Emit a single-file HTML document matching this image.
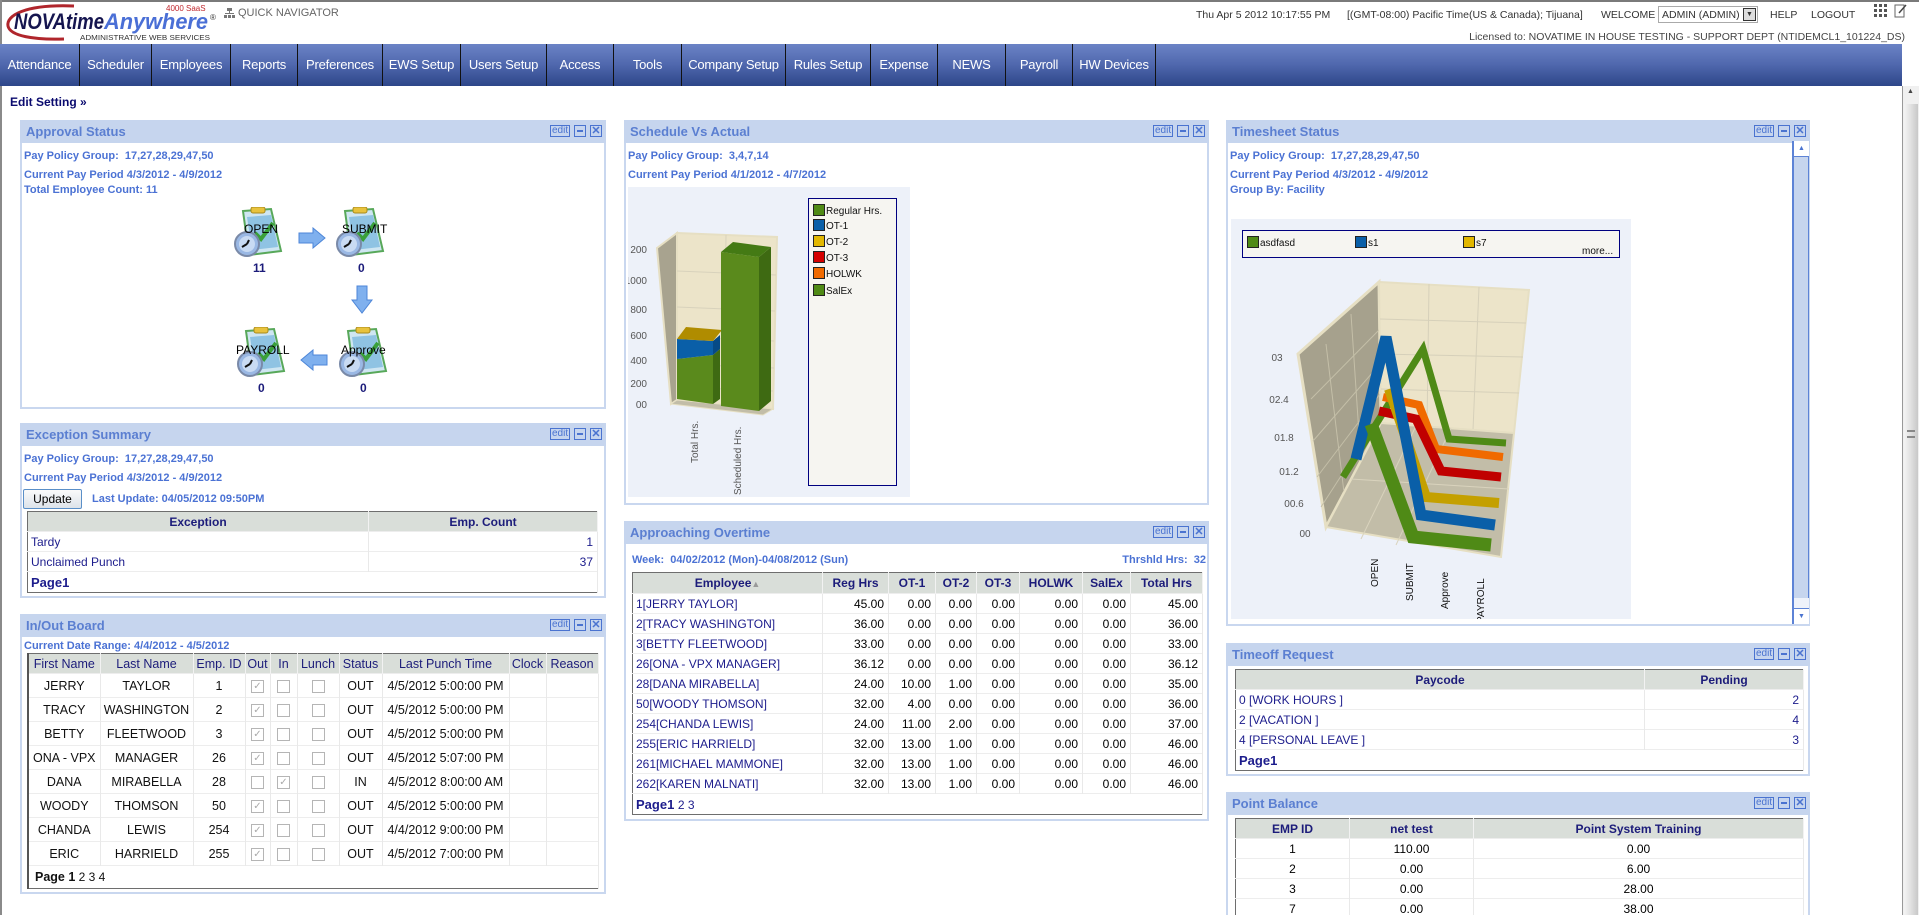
<!DOCTYPE html>
<html><head><meta charset="utf-8">
<style>
*{margin:0;padding:0;box-sizing:border-box}
html,body{width:1919px;height:915px;overflow:hidden;background:#fff;font-family:"Liberation Sans",Arial,sans-serif;position:relative}
.a{position:absolute;white-space:nowrap}
.nav{position:absolute;left:0;top:44px;width:1902px;height:42px;background:linear-gradient(#6b83c6,#4f67ad 50%,#2d4689)}
.nav div{position:absolute;top:0;height:42px;line-height:42px;color:#fff;font-size:13px;text-align:center;border-right:1px solid #111;letter-spacing:-0.2px}
.panel{position:absolute;border:2px solid #c9d7ef;background:#fff}
.hd{position:absolute;left:-2px;right:-2px;top:-2px;height:23px;background:#c6d5ee}
.hd .t{position:absolute;left:6px;top:4px;font-size:13px;font-weight:bold;color:#5b7fd1}
.ic{position:absolute;right:4px;top:5px;height:12px}
.ic span{display:inline-block;vertical-align:top;height:12px;border:1px solid #4a73d0;margin-left:4px;position:relative}
.ic .e{font-size:10px;line-height:10px;color:#4a73d0;padding:0 1px;width:20px;text-align:center}
.ic .m{width:12px}.ic .m:after{content:"";position:absolute;left:2px;right:2px;top:4px;height:2px;background:#4a73d0}
.ic .x{width:12px;font-size:11px;line-height:10px;color:#4a73d0;text-align:center;font-weight:bold}
.inf{position:absolute;font-size:11px;font-weight:bold;color:#4b72d4;white-space:nowrap}
table{position:absolute;border-collapse:collapse;table-layout:fixed;border:1px solid #6e6e6e;font-size:12px}
th{background:#d9ded9;color:#1c1c7a;font-weight:bold;border-right:1px solid #f2f2f2;text-align:center;font-size:12px}
td{border-right:1px solid #e9e9e9;border-top:1px solid #ededed;white-space:nowrap;overflow:hidden}
.io th{font-weight:normal;color:#1c1c7a;font-size:12.5px}
.io td{text-align:center;color:#111;font-size:12.5px}
.io{border-left:2px solid #555}
.nv{color:#1c1c8c}
.r{text-align:right;padding-right:4px}
.pg{font-weight:bold;color:#1c1c8c;font-size:13px;padding-left:6px}
.cb{display:inline-block;width:13px;height:13px;border:1px solid #b5b5b5;background:#fff;vertical-align:middle;font-size:10px;line-height:11px;color:#aaa;text-align:center}
</style></head><body>
<div class="a" style="left:0;top:0;width:1919px;height:2px;background:#7a7a7a"></div>
<div class="a" style="left:0;top:0;width:2px;height:915px;background:#8a8a8a"></div>

<svg class="a" style="left:4px;top:2px" width="260" height="42">
<path d="M70 4 C20 2 2 14 4 24 C6 34 30 38 60 37" fill="none" stroke="#b0262c" stroke-width="3"/>
<text x="10" y="27" font-family="Liberation Sans" font-size="22" font-weight="bold" font-style="italic" fill="#15154f" textLength="90" lengthAdjust="spacingAndGlyphs">NOVAtime</text>
<text x="100" y="27" font-family="Liberation Sans" font-size="22" font-weight="bold" font-style="italic" fill="#4a6fd6" textLength="104" lengthAdjust="spacingAndGlyphs">Anywhere</text>
<text x="206" y="18" font-family="Liberation Sans" font-size="8" fill="#333">®</text>
<text x="162" y="9" font-family="Liberation Sans" font-size="8" fill="#c0282e">4000 SaaS</text>
<text x="76" y="38" font-family="Liberation Sans" font-size="7" fill="#333" textLength="130" lengthAdjust="spacingAndGlyphs">ADMINISTRATIVE WEB SERVICES</text>
</svg>
<svg class="a" style="left:224px;top:8px" width="11" height="10"><rect x="3" y="0" width="5" height="3" fill="#777"/><rect x="5" y="3" width="1" height="3" fill="#777"/><rect x="1" y="5" width="9" height="1" fill="#777"/><rect x="0" y="7" width="3" height="3" fill="#777"/><rect x="4" y="7" width="3" height="3" fill="#777"/><rect x="8" y="7" width="3" height="3" fill="#777"/></svg>
<div class="a" style="left:238px;top:7px;font-size:11px;color:#666">QUICK NAVIGATOR</div>

<div class="a" style="left:1196px;top:9px;font-size:10.5px;color:#333">Thu Apr 5 2012 10:17:55 PM</div>
<div class="a" style="left:1347px;top:9px;font-size:10.5px;color:#333">[(GMT-08:00) Pacific Time(US &amp; Canada); Tijuana]</div>
<div class="a" style="left:1601px;top:9px;font-size:10.5px;color:#333">WELCOME</div>
<div class="a" style="left:1658px;top:6px;width:100px;height:17px;border:1px solid #aaa;font-size:10.5px;color:#333;padding:2px 0 0 3px">ADMIN (ADMIN)<span style="position:absolute;right:1px;top:1px;width:13px;height:13px;border:1px solid #333;background:#ddd;font-size:7px;text-align:center;line-height:12px">▼</span></div>
<div class="a" style="left:1770px;top:9px;font-size:10.5px;color:#333">HELP</div>
<div class="a" style="left:1811px;top:9px;font-size:10.5px;color:#333">LOGOUT</div>
<svg class="a" style="left:1874px;top:4px" width="14" height="14"><g fill="#555"><rect x="0" y="0" width="3" height="3"/><rect x="5" y="0" width="3" height="3"/><rect x="10" y="0" width="3" height="3"/><rect x="0" y="5" width="3" height="3"/><rect x="5" y="5" width="3" height="3"/><rect x="10" y="5" width="3" height="3"/><rect x="0" y="10" width="3" height="3"/><rect x="5" y="10" width="3" height="3"/><rect x="10" y="10" width="3" height="3"/></g></svg>
<svg class="a" style="left:1894px;top:3px" width="14" height="16"><rect x="1" y="2" width="9" height="12" fill="none" stroke="#666"/><path d="M5 10 L12 2" stroke="#444" stroke-width="1.5"/></svg>
<div class="a" style="right:14px;top:31px;font-size:10.5px;color:#444">Licensed to: NOVATIME IN HOUSE TESTING - SUPPORT DEPT (NTIDEMCL1_101224_DS)</div>

<div class="nav">
<div style="left:0;width:80px">Attendance</div>
<div style="left:80px;width:72px">Scheduler</div>
<div style="left:152px;width:79px">Employees</div>
<div style="left:231px;width:67px">Reports</div>
<div style="left:298px;width:85px">Preferences</div>
<div style="left:383px;width:78px">EWS Setup</div>
<div style="left:461px;width:86px">Users Setup</div>
<div style="left:547px;width:67px">Access</div>
<div style="left:614px;width:68px">Tools</div>
<div style="left:682px;width:104px">Company Setup</div>
<div style="left:786px;width:85px">Rules Setup</div>
<div style="left:871px;width:67px">Expense</div>
<div style="left:938px;width:68px">NEWS</div>
<div style="left:1006px;width:67px">Payroll</div>
<div style="left:1073px;width:83px">HW Devices</div>
</div>

<div class="a" style="left:1902px;top:86px;width:17px;height:829px;background:#f0f0f0;border-left:1px solid #999"></div>
<div class="a" style="left:1904px;top:104px;width:14px;height:811px;background:linear-gradient(90deg,#f4f4f4,#e0e0e0,#c8c8c8)"></div>
<div class="a" style="left:1907px;top:88px;font-size:7px;color:#444">▲</div>
<div class="a" style="left:1907px;top:430px;width:8px;height:8px;border-top:2px solid #888;border-bottom:2px solid #888"></div>

<div class="a" style="left:10px;top:95px;font-size:12px;font-weight:bold;color:#0a0a6e">Edit Setting »</div>

<!-- Approval Status -->
<div class="panel" style="left:20px;top:120px;width:586px;height:289px"><div class="hd"><span class="t">Approval Status</span><span class="ic"><span class="e">edit</span><span class="m"></span><span class="x">✕</span></span></div></div>
<div class="inf" style="left:24px;top:150px">Pay Policy Group:&nbsp; 17,27,28,29,47,50</div>
<div class="inf" style="left:24px;top:169px">Current Pay Period 4/3/2012 - 4/9/2012</div>
<div class="inf" style="left:24px;top:184px">Total Employee Count: 11</div>

<svg width="0" height="0" style="position:absolute"><defs>
<g id="clip">
<polygon points="10,4 38,2 48,44 16,48" fill="#cfe6f2" stroke="#58a85a" stroke-width="2"/>
<polygon points="14,10 38,8 45,40 19,43" fill="#8fc3e3"/>
<rect x="18" y="0" width="14" height="6" rx="2" fill="#e8c23c" stroke="#a88a1c"/>
<path d="M22 26 L28 32 L40 16" fill="none" stroke="#3aa03a" stroke-width="4"/>
<circle cx="14" cy="37" r="12" fill="#9ab8e4" stroke="#7a8aa8" stroke-width="2"/>
<circle cx="14" cy="37" r="8" fill="#c9dbf3"/>
<path d="M14 37 L9 40 M14 37 L16 33" stroke="#111" stroke-width="2"/>
</g></defs></svg>
<svg class="a" style="left:233px;top:207px" width="54" height="52"><use href="#clip"/></svg>
<svg class="a" style="left:335px;top:207px" width="54" height="52"><use href="#clip"/></svg>
<svg class="a" style="left:236px;top:327px" width="54" height="52"><use href="#clip"/></svg>
<svg class="a" style="left:338px;top:327px" width="54" height="52"><use href="#clip"/></svg>
<div class="a" style="left:244px;top:222px;font-size:12px;color:#000">OPEN</div>
<div class="a" style="left:342px;top:222px;font-size:12px;color:#000">SUBMIT</div>
<div class="a" style="left:236px;top:343px;font-size:12px;color:#000">PAYROLL</div>
<div class="a" style="left:341px;top:343px;font-size:12px;color:#000">Approve</div>
<div class="a" style="left:253px;top:261px;font-size:12px;font-weight:bold;color:#1c1c7a">11</div>
<div class="a" style="left:358px;top:261px;font-size:12px;font-weight:bold;color:#1c1c7a">0</div>
<div class="a" style="left:258px;top:381px;font-size:12px;font-weight:bold;color:#1c1c7a">0</div>
<div class="a" style="left:360px;top:381px;font-size:12px;font-weight:bold;color:#1c1c7a">0</div>
<svg class="a" style="left:298px;top:227px" width="28" height="22"><polygon points="1,6 15,6 15,1 27,11 15,21 15,16 1,16" fill="#7fb0ee" stroke="#4d86d8"/></svg>
<svg class="a" style="left:351px;top:285px" width="22" height="29"><polygon points="6,1 16,1 16,15 21,15 11,28 1,15 6,15" fill="#7fb0ee" stroke="#4d86d8"/></svg>
<svg class="a" style="left:300px;top:349px" width="28" height="22"><polygon points="27,6 13,6 13,1 1,11 13,21 13,16 27,16" fill="#7fb0ee" stroke="#4d86d8"/></svg>

<!-- Exception Summary -->
<div class="panel" style="left:20px;top:423px;width:586px;height:175px"><div class="hd"><span class="t">Exception Summary</span><span class="ic"><span class="e">edit</span><span class="m"></span><span class="x">✕</span></span></div></div>
<div class="inf" style="left:24px;top:453px">Pay Policy Group:&nbsp; 17,27,28,29,47,50</div>
<div class="inf" style="left:24px;top:472px">Current Pay Period 4/3/2012 - 4/9/2012</div>
<div class="a" style="left:23px;top:489px;width:59px;height:20px;border:1px solid #5a8fc8;border-radius:2px;background:linear-gradient(#fafafa,#dde3ea);font-size:12px;text-align:center;line-height:18px;color:#000">Update</div>
<div class="inf" style="left:92px;top:493px">Last Update: 04/05/2012 09:50PM</div>
<table style="left:27px;top:511px;width:570px">
<colgroup><col style="width:341px"><col style="width:229px"></colgroup>
<tr style="height:20px"><th>Exception</th><th>Emp. Count</th></tr>
<tr style="height:20px"><td class="nv" style="padding-left:3px">Tardy</td><td class="r nv">1</td></tr>
<tr style="height:20px"><td class="nv" style="padding-left:3px">Unclaimed Punch</td><td class="r nv">37</td></tr>
<tr style="height:21px"><td colspan="2" class="pg" style="padding-left:3px">Page1</td></tr>
</table>

<!-- In/Out Board -->
<div class="panel" style="left:20px;top:614px;width:586px;height:280px"><div class="hd"><span class="t">In/Out Board</span><span class="ic"><span class="e">edit</span><span class="m"></span><span class="x">✕</span></span></div></div>
<div class="inf" style="left:24px;top:640px">Current Date Range: 4/4/2012 - 4/5/2012</div>
<table class="io" style="left:27px;top:653px;width:570px">
<colgroup><col style="width:72px"><col style="width:93px"><col style="width:52px"><col style="width:25px"><col style="width:27px"><col style="width:42px"><col style="width:43px"><col style="width:127px"><col style="width:37px"><col style="width:52px"></colgroup>
<tr style="height:20px"><th>First Name</th><th>Last Name</th><th>Emp. ID</th><th>Out</th><th>In</th><th>Lunch</th><th>Status</th><th>Last Punch Time</th><th>Clock</th><th>Reason</th></tr>
<tr style="height:24px"><td>JERRY</td><td>TAYLOR</td><td>1</td><td><span class="cb">✓</span></td><td><span class="cb"></span></td><td><span class="cb"></span></td><td>OUT</td><td>4/5/2012 5:00:00 PM</td><td></td><td></td></tr>
<tr style="height:24px"><td>TRACY</td><td>WASHINGTON</td><td>2</td><td><span class="cb">✓</span></td><td><span class="cb"></span></td><td><span class="cb"></span></td><td>OUT</td><td>4/5/2012 5:00:00 PM</td><td></td><td></td></tr>
<tr style="height:24px"><td>BETTY</td><td>FLEETWOOD</td><td>3</td><td><span class="cb">✓</span></td><td><span class="cb"></span></td><td><span class="cb"></span></td><td>OUT</td><td>4/5/2012 5:00:00 PM</td><td></td><td></td></tr>
<tr style="height:24px"><td>ONA - VPX</td><td>MANAGER</td><td>26</td><td><span class="cb">✓</span></td><td><span class="cb"></span></td><td><span class="cb"></span></td><td>OUT</td><td>4/5/2012 5:07:00 PM</td><td></td><td></td></tr>
<tr style="height:24px"><td>DANA</td><td>MIRABELLA</td><td>28</td><td><span class="cb"></span></td><td><span class="cb">✓</span></td><td><span class="cb"></span></td><td>IN</td><td>4/5/2012 8:00:00 AM</td><td></td><td></td></tr>
<tr style="height:24px"><td>WOODY</td><td>THOMSON</td><td>50</td><td><span class="cb">✓</span></td><td><span class="cb"></span></td><td><span class="cb"></span></td><td>OUT</td><td>4/5/2012 5:00:00 PM</td><td></td><td></td></tr>
<tr style="height:24px"><td>CHANDA</td><td>LEWIS</td><td>254</td><td><span class="cb">✓</span></td><td><span class="cb"></span></td><td><span class="cb"></span></td><td>OUT</td><td>4/4/2012 9:00:00 PM</td><td></td><td></td></tr>
<tr style="height:24px"><td>ERIC</td><td>HARRIELD</td><td>255</td><td><span class="cb">✓</span></td><td><span class="cb"></span></td><td><span class="cb"></span></td><td>OUT</td><td>4/5/2012 7:00:00 PM</td><td></td><td></td></tr>
<tr style="height:23px"><td colspan="10" style="text-align:left" class="pg">Page 1<span style="font-weight:normal;font-size:12px"> 2 3 4</span></td></tr>
</table>

<!-- Schedule Vs Actual -->
<div class="panel" style="left:624px;top:120px;width:585px;height:385px"><div class="hd"><span class="t">Schedule Vs Actual</span><span class="ic"><span class="e">edit</span><span class="m"></span><span class="x">✕</span></span></div></div>
<div class="inf" style="left:628px;top:150px">Pay Policy Group:&nbsp; 3,4,7,14</div>
<div class="inf" style="left:628px;top:169px">Current Pay Period 4/1/2012 - 4/7/2012</div>
<svg class="a" style="left:628px;top:187px" width="282" height="310">
<rect x="0" y="0" width="282" height="310" fill="#edf1f9"/>
<polygon points="29,61 49,46 49,213 43,217" fill="#a8a38f" stroke="#e6dfc3" stroke-width="2"/>
<polygon points="49,46 149,50 145,222 49,213" fill="#ece4c9" stroke="#e6dfc3" stroke-width="2"/>
<g stroke="#d8d2bc" stroke-width="1"><line x1="49" y1="84" x2="148" y2="88"/><line x1="49" y1="120" x2="147" y2="124"/><line x1="49" y1="150" x2="146" y2="154"/><line x1="49" y1="177" x2="146" y2="181"/><line x1="49" y1="200" x2="145" y2="204"/><line x1="98" y1="48" x2="96" y2="217"/></g>
<polygon points="43,217 49,213 145,222 135,228" fill="#c2bda8" stroke="#e6dfc3"/>
<polygon points="49,172 85,168 85,217 49,212" fill="#5a8a1c"/>
<polygon points="85,168 92,162 92,212 85,217" fill="#3e6a12"/>
<polygon points="49,152 85,154 85,168 49,172" fill="#0a5fa8"/>
<polygon points="85,154 92,148 92,162 85,168" fill="#064a86"/>
<polygon points="49,152 58,140 94,143 85,154" fill="#b08c00"/>
<polygon points="93,65 131,70 131,224 93,219" fill="#5a8a1c"/>
<polygon points="131,70 143,60 143,214 131,224" fill="#3e6a12"/>
<polygon points="93,65 105,55 143,60 131,70" fill="#447a14"/>
<g font-family="Liberation Sans" font-size="10" fill="#555" text-anchor="end"><text x="19" y="66">200</text><text x="19" y="97">1000</text><text x="19" y="126">800</text><text x="19" y="152">600</text><text x="19" y="177">400</text><text x="19" y="200">200</text><text x="19" y="221">00</text></g>
<g font-family="Liberation Sans" font-size="10" fill="#555"><text transform="translate(70,276) rotate(-90)">Total Hrs.</text><text transform="translate(113,308) rotate(-90)">Scheduled Hrs.</text></g>
<rect x="180.5" y="11.5" width="88" height="287" fill="#f6f5f1" stroke="#000080"/>
<g stroke="#222" stroke-width="1"><rect x="185.5" y="17.5" width="11" height="11" fill="#4f8a16"/><rect x="185.5" y="32.5" width="11" height="11" fill="#0a5fa8"/><rect x="185.5" y="48.5" width="11" height="11" fill="#e2b700"/><rect x="185.5" y="64.5" width="11" height="11" fill="#d40000"/><rect x="185.5" y="80.5" width="11" height="11" fill="#f06a00"/><rect x="185.5" y="97.5" width="11" height="11" fill="#4f8a16"/></g>
<g font-family="Liberation Sans" font-size="10" fill="#111"><text x="198" y="27">Regular Hrs.</text><text x="198" y="42">OT-1</text><text x="198" y="58">OT-2</text><text x="198" y="74">OT-3</text><text x="198" y="90">HOLWK</text><text x="198" y="107">SalEx</text></g>
</svg>

<!-- Approaching Overtime -->
<div class="panel" style="left:624px;top:521px;width:585px;height:300px"><div class="hd"><span class="t">Approaching Overtime</span><span class="ic"><span class="e">edit</span><span class="m"></span><span class="x">✕</span></span></div></div>
<div class="inf" style="left:632px;top:554px">Week:&nbsp; 04/02/2012 (Mon)-04/08/2012 (Sun)</div>
<div class="inf" style="right:713px;top:554px">Thrshld Hrs:&nbsp; 32</div>
<table style="left:632px;top:572px;width:570px">
<colgroup><col style="width:190px"><col style="width:66px"><col style="width:47px"><col style="width:41px"><col style="width:43px"><col style="width:63px"><col style="width:48px"><col style="width:72px"></colgroup>
<tr style="height:21px"><th>Employee<span style="color:#999;font-size:9px">▲</span></th><th>Reg Hrs</th><th>OT-1</th><th>OT-2</th><th>OT-3</th><th>HOLWK</th><th>SalEx</th><th>Total Hrs</th></tr>
<tr style="height:20px"><td class="nv" style="padding-left:3px">1[JERRY TAYLOR]</td><td class="r">45.00</td><td class="r">0.00</td><td class="r">0.00</td><td class="r">0.00</td><td class="r">0.00</td><td class="r">0.00</td><td class="r">45.00</td></tr>
<tr style="height:20px"><td class="nv" style="padding-left:3px">2[TRACY WASHINGTON]</td><td class="r">36.00</td><td class="r">0.00</td><td class="r">0.00</td><td class="r">0.00</td><td class="r">0.00</td><td class="r">0.00</td><td class="r">36.00</td></tr>
<tr style="height:20px"><td class="nv" style="padding-left:3px">3[BETTY FLEETWOOD]</td><td class="r">33.00</td><td class="r">0.00</td><td class="r">0.00</td><td class="r">0.00</td><td class="r">0.00</td><td class="r">0.00</td><td class="r">33.00</td></tr>
<tr style="height:20px"><td class="nv" style="padding-left:3px">26[ONA - VPX MANAGER]</td><td class="r">36.12</td><td class="r">0.00</td><td class="r">0.00</td><td class="r">0.00</td><td class="r">0.00</td><td class="r">0.00</td><td class="r">36.12</td></tr>
<tr style="height:20px"><td class="nv" style="padding-left:3px">28[DANA MIRABELLA]</td><td class="r">24.00</td><td class="r">10.00</td><td class="r">1.00</td><td class="r">0.00</td><td class="r">0.00</td><td class="r">0.00</td><td class="r">35.00</td></tr>
<tr style="height:20px"><td class="nv" style="padding-left:3px">50[WOODY THOMSON]</td><td class="r">32.00</td><td class="r">4.00</td><td class="r">0.00</td><td class="r">0.00</td><td class="r">0.00</td><td class="r">0.00</td><td class="r">36.00</td></tr>
<tr style="height:20px"><td class="nv" style="padding-left:3px">254[CHANDA LEWIS]</td><td class="r">24.00</td><td class="r">11.00</td><td class="r">2.00</td><td class="r">0.00</td><td class="r">0.00</td><td class="r">0.00</td><td class="r">37.00</td></tr>
<tr style="height:20px"><td class="nv" style="padding-left:3px">255[ERIC HARRIELD]</td><td class="r">32.00</td><td class="r">13.00</td><td class="r">1.00</td><td class="r">0.00</td><td class="r">0.00</td><td class="r">0.00</td><td class="r">46.00</td></tr>
<tr style="height:20px"><td class="nv" style="padding-left:3px">261[MICHAEL MAMMONE]</td><td class="r">32.00</td><td class="r">13.00</td><td class="r">1.00</td><td class="r">0.00</td><td class="r">0.00</td><td class="r">0.00</td><td class="r">46.00</td></tr>
<tr style="height:20px"><td class="nv" style="padding-left:3px">262[KAREN MALNATI]</td><td class="r">32.00</td><td class="r">13.00</td><td class="r">1.00</td><td class="r">0.00</td><td class="r">0.00</td><td class="r">0.00</td><td class="r">46.00</td></tr>
<tr style="height:21px"><td colspan="8" class="pg" style="padding-left:3px">Page1 <span style="font-weight:normal;font-size:12px">2 3</span></td></tr>
</table>

<!-- Timesheet Status -->
<div class="panel" style="left:1226px;top:120px;width:584px;height:506px"><div class="hd"><span class="t">Timesheet Status</span><span class="ic"><span class="e">edit</span><span class="m"></span><span class="x">✕</span></span></div></div>
<div class="a" style="left:1792px;top:141px;width:17px;height:483px;background:#c6d5ee;border-left:2px solid #5d83d6;border-right:1px solid #5d83d6"></div>
<div class="a" style="left:1794px;top:141px;width:15px;height:16px;background:#fff;border-bottom:1px solid #5d83d6;font-size:7px;color:#4a73d0;text-align:center;line-height:16px">▲</div>
<div class="a" style="left:1794px;top:598px;width:15px;height:10px;background:#eef2fa"></div>
<div class="a" style="left:1794px;top:608px;width:15px;height:16px;background:#fff;border-top:1px solid #5d83d6;font-size:7px;color:#4a73d0;text-align:center;line-height:16px">▼</div>
<div class="inf" style="left:1230px;top:150px">Pay Policy Group:&nbsp; 17,27,28,29,47,50</div>
<div class="inf" style="left:1230px;top:169px">Current Pay Period 4/3/2012 - 4/9/2012</div>
<div class="inf" style="left:1230px;top:184px">Group By: Facility</div>
<svg class="a" style="left:1231px;top:219px" width="400" height="400">
<rect x="0" y="0" width="400" height="400" fill="#edf1f9"/>
<rect x="11.5" y="11.5" width="377" height="27" fill="#f6f5f1" stroke="#000080"/>
<rect x="16.5" y="17.5" width="11" height="11" fill="#4f8a16" stroke="#222"/>
<rect x="124.5" y="17.5" width="11" height="11" fill="#0a5fa8" stroke="#222"/>
<rect x="232.5" y="17.5" width="11" height="11" fill="#e2b700" stroke="#222"/>
<g font-family="Liberation Sans" font-size="10" fill="#111"><text x="29" y="27">asdfasd</text><text x="137" y="27">s1</text><text x="245" y="27">s7</text><text x="351" y="35">more...</text></g>
<polygon points="67,135 148,63 150,204 95,308" fill="#a6a18d" stroke="#e6dfc3" stroke-width="3"/>
<g stroke="#c4bfa8" stroke-width="1"><line x1="80" y1="180" x2="149" y2="110"/><line x1="82" y1="222" x2="149" y2="145"/><line x1="86" y1="258" x2="149" y2="175"/><line x1="90" y1="288" x2="150" y2="195"/><line x1="95" y1="125" x2="115" y2="290"/><line x1="120" y1="95" x2="130" y2="245"/></g>
<polygon points="148,63 298,71 283,214 150,204" fill="#ece4c9" stroke="#e6dfc3" stroke-width="2"/>
<g stroke="#d6d0ba" stroke-width="1"><line x1="149" y1="100" x2="295" y2="104"/><line x1="149" y1="135" x2="292" y2="138"/><line x1="150" y1="170" x2="288" y2="174"/><line x1="198" y1="65" x2="196" y2="207"/><line x1="248" y1="68" x2="242" y2="211"/></g>
<polygon points="95,308 150,204 283,214 270,338" fill="#c2bda8" stroke="#e6dfc3" stroke-width="2"/>
<g stroke="#d9d3bd" stroke-width="1"><line x1="130" y1="320" x2="185" y2="207"/><line x1="165" y1="326" x2="220" y2="209"/><line x1="120" y1="260" x2="278" y2="270"/></g>
<g fill="none" stroke-linejoin="miter">
<polyline points="112,258 192,130 218,220 275,224" stroke="#4f8a16" stroke-width="7"/>
<polyline points="152,178 188,186 205,230 272,238" stroke="#f06a00" stroke-width="8"/>
<polyline points="148,192 185,200 210,252 270,258" stroke="#c00000" stroke-width="9"/>
<polyline points="158,170 195,278 268,284" stroke="#c4a000" stroke-width="10"/>
<polyline points="125,240 155,118 190,296 264,306" stroke="#0a5fa8" stroke-width="11"/>
<polyline points="140,205 182,318 260,326" stroke="#4f8a16" stroke-width="13"/>
</g>
<g font-family="Liberation Sans" font-size="10" fill="#555" text-anchor="middle"><text x="46" y="142">03</text><text x="48" y="184">02.4</text><text x="53" y="222">01.8</text><text x="58" y="256">01.2</text><text x="63" y="288">00.6</text><text x="74" y="318">00</text></g>
<g font-family="Liberation Sans" font-size="10" fill="#111"><text transform="translate(147,368) rotate(-90)">OPEN</text><text transform="translate(182,382) rotate(-90)">SUBMIT</text><text transform="translate(217,390) rotate(-90)">Approve</text><text transform="translate(253,404) rotate(-90)">PAYROLL</text></g>
</svg>

<!-- Timeoff Request -->
<div class="panel" style="left:1226px;top:643px;width:584px;height:133px"><div class="hd"><span class="t">Timeoff Request</span><span class="ic"><span class="e">edit</span><span class="m"></span><span class="x">✕</span></span></div></div>
<table style="left:1235px;top:669px;width:568px">
<colgroup><col style="width:409px"><col style="width:159px"></colgroup>
<tr style="height:20px"><th>Paycode</th><th>Pending</th></tr>
<tr style="height:20px"><td class="nv" style="padding-left:3px">0 [WORK HOURS ]</td><td class="r nv">2</td></tr>
<tr style="height:20px"><td class="nv" style="padding-left:3px">2 [VACATION ]</td><td class="r nv">4</td></tr>
<tr style="height:20px"><td class="nv" style="padding-left:3px">4 [PERSONAL LEAVE ]</td><td class="r nv">3</td></tr>
<tr style="height:21px"><td colspan="2" class="pg" style="padding-left:3px">Page1</td></tr>
</table>

<!-- Point Balance -->
<div class="panel" style="left:1226px;top:792px;width:584px;height:140px"><div class="hd"><span class="t">Point Balance</span><span class="ic"><span class="e">edit</span><span class="m"></span><span class="x">✕</span></span></div></div>
<table style="left:1235px;top:818px;width:568px">
<colgroup><col style="width:114px"><col style="width:124px"><col style="width:330px"></colgroup>
<tr style="height:20px"><th>EMP ID</th><th>net test</th><th>Point System Training</th></tr>
<tr style="height:20px"><td style="text-align:center">1</td><td style="text-align:center">110.00</td><td style="text-align:center">0.00</td></tr>
<tr style="height:20px"><td style="text-align:center">2</td><td style="text-align:center">0.00</td><td style="text-align:center">6.00</td></tr>
<tr style="height:20px"><td style="text-align:center">3</td><td style="text-align:center">0.00</td><td style="text-align:center">28.00</td></tr>
<tr style="height:20px"><td style="text-align:center">7</td><td style="text-align:center">0.00</td><td style="text-align:center">38.00</td></tr>
</table>
</body></html>
